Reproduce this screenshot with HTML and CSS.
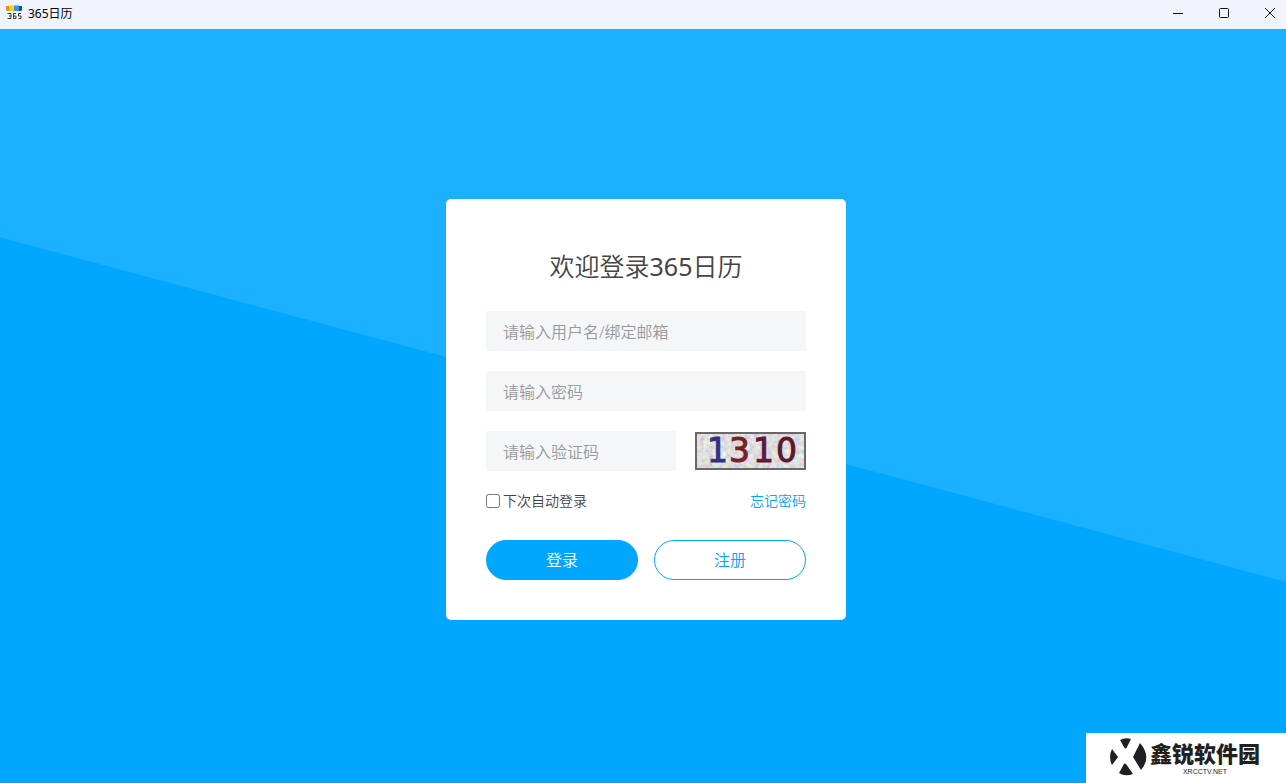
FILE: index.html
```html
<!DOCTYPE html>
<html lang="zh-CN">
<head>
<meta charset="utf-8">
<meta name="viewport" content="width=device-width, initial-scale=1">
<title>365日历</title>
<link rel="stylesheet" href="styles.css">
</head>
<body>
<header class="titlebar">
  <div class="app">
    <svg class="app-icon" width="16" height="16" viewBox="0 0 16 16" aria-hidden="true">
      <path d="M1 5h14v10H1z" fill="#fff"/>
      <path d="M0 1h3v5H1.500A1.500 1.500 0 0 1 0 4.500z" fill="#f58a0b"/>
      <path d="M3 0.500h5V6H3z" fill="#ffd01e"/>
      <path d="M8 0.500h5V6H8z" fill="#3993df"/>
      <path d="M13 1h3v3.500A1.500 1.500 0 0 1 14.500 6H13z" fill="#0756a5"/>
      <path d="M1.500 8.500h3.500v5H1.500M3 11h2M10 8.500H7.500v5H10V11H7.500M15 8.500h-2.500V11H15v2.500h-2.500" fill="none" stroke="#333"/>
    </svg>
    <span class="app-name">365日历</span>
  </div>
  <div class="window-controls">
    <button class="window-button" type="button" aria-label="最小化"><svg width="12" height="12" viewBox="0 0 12 12"><path d="M1 6.500h10"/></svg></button>
    <button class="window-button" type="button" aria-label="最大化"><svg width="12" height="12" viewBox="0 0 12 12"><rect x="1.500" y="1.500" width="9" height="9" rx="1"/></svg></button>
    <button class="window-button" type="button" aria-label="关闭"><svg width="12" height="12" viewBox="0 0 12 12"><path d="M1 1l10 10M11 1L1 11"/></svg></button>
  </div>
</header>
<main class="stage">
  <form class="card">
    <h1 class="title">欢迎登录<span class="title-number">365</span>日历</h1>
    <input class="field" type="text" placeholder="请输入用户名/绑定邮箱" aria-label="用户名">
    <input class="field" type="password" placeholder="请输入密码" aria-label="密码">
    <div class="captcha-row">
      <input class="field" type="text" placeholder="请输入验证码" aria-label="验证码">
      <svg class="captcha" width="111" height="38" viewBox="0 0 111 38" role="img" aria-label="验证码 1310">
        <defs>
          <filter id="noise" x="0" y="0" width="100%" height="100%">
            <feTurbulence type="fractalNoise" baseFrequency="0.22" numOctaves="2" seed="5"/>
            <feColorMatrix values="0.7 0 0 0 0.4  0 0.7 0 0 0.38  0 0 0.7 0 0.39  0 0 0 0 1"/>
          </filter>
        </defs>
        <rect width="111" height="38" fill="#d0d0d0"/>
        <rect width="111" height="38" filter="url(#noise)"/>
        <rect x="1" y="1" width="109" height="36" fill="none" stroke="#686868" stroke-width="2"/>
        <g class="captcha-digits">
          <text x="12" y="30" fill="#303183" stroke="#303183">1</text>
          <text x="34" y="30" fill="#76222b" stroke="#76222b">3</text>
          <text x="58" y="30" fill="#611838" stroke="#611838">1</text>
          <text x="81" y="30" fill="#591b2c" stroke="#591b2c">0</text>
        </g>
      </svg>
    </div>
    <div class="options">
      <label class="remember" for="auto-login"><input class="checkbox" id="auto-login" type="checkbox">下次自动登录</label>
      <a class="forgot" href="#">忘记密码</a>
    </div>
    <div class="actions">
      <button class="button button-primary" type="submit">登录</button>
      <button class="button button-outline" type="button">注册</button>
    </div>
  </form>
  <aside class="watermark">
    <svg class="brand-icon" width="38" height="38" viewBox="0 0 38 38" aria-hidden="true">
      <path d="M11 2Q16-1 22 1L18 9Q16.500 12 15 9zM3 11L9 19 3 27Q-1 19 3 11zM31 5Q43 19 32 32L24 19zM17 26L24 36Q16 39 10 35L15 26Q16 25 17 26z" fill="#231f20"/>
    </svg>
    <div class="brand">
      <span class="brand-name">鑫锐软件园</span>
      <span class="brand-url">XRCCTV.NET</span>
    </div>
  </aside>
</main>
</body>
</html>
```
FILE: styles.css
```css
* {
  box-sizing: border-box;
}

body {
  margin: 0;
  min-height: 100vh;
  display: flex;
  flex-direction: column;
  font-family: "Noto Sans", "Noto Sans CJK SC", sans-serif;
  color: #444;
}

button,
input {
  font: inherit;
}

.titlebar {
  display: flex;
  justify-content: space-between;
  height: 29px;
  background: #eff3fb;
}

.app {
  display: flex;
  align-items: center;
  gap: 6px;
  padding: 0 6px 4px;
}

.app-name {
  padding-top: 2px;
  font-size: 12px;
  line-height: 16px;
  color: #000;
}

.window-controls {
  display: flex;
  gap: 14px;
}

.window-button {
  display: flex;
  align-items: center;
  justify-content: center;
  width: 32px;
  padding: 0 0 4px;
  border: 0;
  background: none;
}

.window-button svg {
  fill: none;
  stroke: #111;
}

.stage {
  position: relative;
  flex: 1;
  display: flex;
  align-items: center;
  justify-content: center;
  padding: 7px 0 0 6px;
  background: linear-gradient(195deg, #1cb1ff calc(50% + 3px), #00a6ff calc(50% + 4px));
}

.card {
  display: flex;
  flex-direction: column;
  gap: 20px;
  width: 400px;
  max-width: 100%;
  padding: 47px 40px 40px;
  border-radius: 5px;
  background: #fff;
}

.title {
  margin: 0 0 5px;
  font-size: 25px;
  line-height: 40px;
  font-weight: 350;
  text-align: center;
}

.title-number {
  font-weight: 400;
}

.field {
  width: 100%;
  min-width: 0;
  height: 40px;
  padding: 2px 17px 0;
  border: 0;
  border-radius: 1px;
  background: #f4f6f8;
  font-size: 16px;
  font-weight: 350;
}

.field::placeholder {
  color: #999;
  opacity: 1;
}

.captcha-row {
  display: flex;
  align-items: center;
  gap: 19px;
}

.captcha {
  flex: none;
}

.captcha-digits {
  font: 33px "DejaVu Sans", sans-serif;
  stroke-width: 1;
}

.options {
  display: flex;
  align-items: center;
  justify-content: space-between;
  font-size: 14px;
  line-height: 20px;
  font-weight: 350;
}

.remember {
  display: flex;
  align-items: center;
  gap: 3px;
}

.checkbox {
  width: 14px;
  height: 14px;
  margin: 0;
}

.forgot {
  color: #00a6ff;
  text-decoration: none;
}

.actions {
  display: flex;
  gap: 16px;
  padding-top: 9px;
}

.button {
  flex: 1;
  height: 40px;
  padding: 0 0 2px;
  border: 1px solid #00a6ff;
  border-radius: 20px;
  font-size: 16px;
  font-weight: 350;
}

.button-primary {
  background: #00a6ff;
  color: #fff;
}

.button-outline {
  background: #fff;
  color: #00a6ff;
}

.watermark {
  position: absolute;
  right: 0;
  bottom: 0;
  display: flex;
  align-items: center;
  gap: 3px;
  width: 200px;
  height: 50px;
  padding: 0 0 3px 23px;
  background: #fff;
  color: #231f20;
}

.brand {
  display: flex;
  flex-direction: column;
  align-items: center;
}

.brand-name {
  font-size: 22px;
  line-height: 30px;
  font-weight: 900;
}

.brand-url {
  font: 7px/8px "Liberation Sans", Arial, sans-serif;
}
```
